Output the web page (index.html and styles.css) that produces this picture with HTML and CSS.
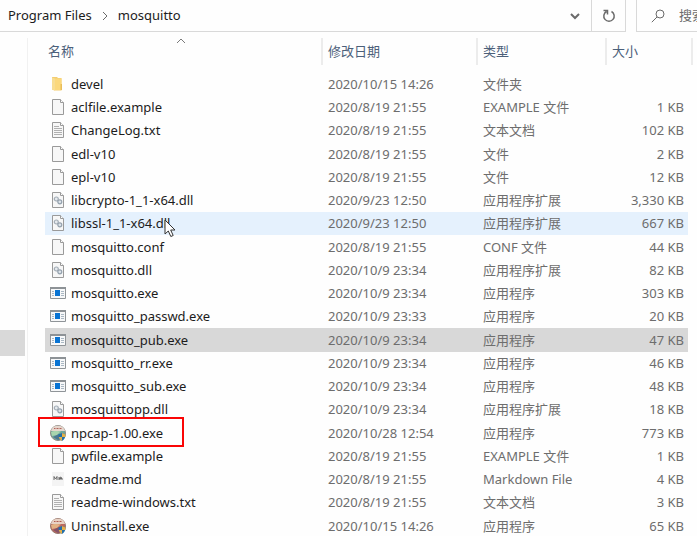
FILE: index.html
```html
<!DOCTYPE html>
<html lang="zh-CN">
<head>
<meta charset="utf-8">
<title>mosquitto</title>
<link rel="stylesheet" href="styles.css">
</head>
<body>
<svg class="sprite" aria-hidden="true">
  <symbol id="folder" viewBox="0 0 16 16"><path d="M2 1h5l1 1h3.500v12.500H4.500L2 13.500z" fill="#f3cd72"/><path d="M2 1.500l3 1v12L2 13.500z" fill="#f8dd92"/><path d="M5 2.500h6.500V14H5z" fill="#fbd87c"/><path d="M10.500 8h1.500v6h-1.500z" fill="#e9bd58"/></symbol>
  <symbol id="file" viewBox="0 0 16 16"><path d="M2.500.5h8l3 3v12h-11z" fill="#f7f7f7" stroke="#9a9a9a"/><path d="M10.500.5v3h3" fill="#fff" stroke="#9a9a9a"/></symbol>
  <symbol id="text" viewBox="0 0 16 16"><use href="#file"/><path d="M4 4.500h5M4 6.500h8M4 8.500h8M4 10.500h8M4 12.500h8" stroke="#b0b0b0"/></symbol>
  <symbol id="dll" viewBox="0 0 16 16"><use href="#file"/><circle cx="6.300" cy="7" r="2" fill="#e6eaee" stroke="#a3adb7" stroke-width="1.200"/><circle cx="9.800" cy="9.800" r="2" fill="#dde4ea" stroke="#94a1ad" stroke-width="1.200"/></symbol>
  <symbol id="exe" viewBox="0 0 16 16"><path d="M.5 2.500h15v11H.5z" fill="#f7f8f9" stroke="#8f9498"/><path d="M0 2h16v2H0z" fill="#8d9296"/><path d="M5 5h5v6H5z" fill="#0873d3"/><path d="M2 6.500h2M2 8.500h2M2 10.500h2M11 6.500h3M11 8.500h3M11 10.500h3" stroke="#aab8c4"/></symbol>
  <symbol id="shield" viewBox="0 0 16 16"><path d="M8.500 9.500l3.500-1.500 3.500 1.500c0 3-1 5-3.500 6.500-2.500-1.500-3.500-3.500-3.500-6.500z" fill="#246fa8"/><path d="M12 8l3.500 1.500V12H12zM8.800 12H12v4c-2-1.200-3-2.500-3.200-4z" fill="#e5b048"/></symbol>
  <symbol id="npcap" viewBox="0 0 16 16"><circle cx="8" cy="8" r="7.500" fill="#6fa69b" stroke="#8f8a84"/><path d="M1 6C2 2 5 .8 8 .8S14 2 15 6z" fill="#e6d6cd"/><path d="M4 3.500h8" stroke="#b0645a" stroke-dasharray="1 .5"/><path d="M1 7c4-2 7 0 10-1l-4 4-5 1z" fill="#a9d4ae"/><path d="M3 12l6-3 2 5-3 1z" fill="#4d7690"/><use href="#shield"/></symbol>
  <symbol id="uninstall" viewBox="0 0 16 16"><circle cx="8" cy="8" r="7.500" fill="#bd6a60" stroke="#94776d"/><path d="M1 6C2 2 5 .8 8 .8S14 2 15 6z" fill="#e8d2c4"/><path d="M4 3.500h8" stroke="#b0584c" stroke-dasharray="1 .5"/><path d="M1 7c4-2 7 0 10-1l-4 4-5 1z" fill="#e1b183"/><path d="M3 12l6-3 2 5-3 1z" fill="#855367"/><use href="#shield"/></symbol>
  <symbol id="markdown" viewBox="0 0 16 16"><path d="M2 1h12v14H2z" fill="#f4f4f4"/><path d="M4 9V5.500L5.500 8 7 5.500V9M9 9V6M10 9V6l2 1v2M9 7.500h3" fill="none" stroke="#6a6a6a"/></symbol>
</svg>

<header class="topbar">
  <div class="address">
    <nav class="crumbs" aria-label="路径">
      <button type="button">Program Files</button>
      <svg class="crumb-arrow" viewBox="0 0 8 10"><path d="M2 1l4 4-4 4"/></svg>
      <button type="button">mosquitto</button>
    </nav>
    <button class="tool history" type="button" aria-label="历史记录"><svg viewBox="0 0 12 12"><path d="M2 4l4 4 4-4"/></svg></button>
    <button class="tool refresh" type="button" aria-label="刷新"><svg viewBox="0 0 14 14"><path d="M9.500 2.500a5.200 5.200 0 1 1-5 0M1.500 1.500h4v4"/></svg></button>
  </div>
  <label class="search">
    <svg viewBox="0 0 14 14"><circle cx="9" cy="5" r="4"/><path d="M6 8L.8 13.200"/></svg>
    <input type="search" placeholder="搜索" aria-label="搜索">
  </label>
</header>

<div class="body">
  <aside class="tree"><div class="tree-current"></div></aside>
  <main class="list">
    <table>
      <colgroup><col><col class="c-date"><col class="c-type"><col class="c-size"><col class="c-end"></colgroup>
      <thead>
        <tr>
          <th><div>名称</div><svg class="sort" viewBox="0 0 10 6"><path d="M1 5l4-4 4 4"/></svg></th>
          <th><div>修改日期</div></th><th><div>类型</div></th><th><div>大小</div></th><td><div></div></td>
        </tr>
      </thead>
      <tbody>
        <tr><td><span class="name"><svg><use href="#folder"/></svg>devel</span></td><td>2020/10/15 14:26</td><td>文件夹</td><td></td><td></td></tr>
        <tr><td><span class="name"><svg><use href="#file"/></svg>aclfile.example</span></td><td>2020/8/19 21:55</td><td>EXAMPLE 文件</td><td>1 KB</td><td></td></tr>
        <tr><td><span class="name"><svg><use href="#text"/></svg>ChangeLog.txt</span></td><td>2020/8/19 21:55</td><td>文本文档</td><td>102 KB</td><td></td></tr>
        <tr><td><span class="name"><svg><use href="#file"/></svg>edl-v10</span></td><td>2020/8/19 21:55</td><td>文件</td><td>2 KB</td><td></td></tr>
        <tr><td><span class="name"><svg><use href="#file"/></svg>epl-v10</span></td><td>2020/8/19 21:55</td><td>文件</td><td>12 KB</td><td></td></tr>
        <tr><td><span class="name"><svg><use href="#dll"/></svg>libcrypto-1_1-x64.dll</span></td><td>2020/9/23 12:50</td><td>应用程序扩展</td><td>3,330 KB</td><td></td></tr>
        <tr class="hover"><td><span class="name"><svg><use href="#dll"/></svg>libssl-1_1-x64.dll</span><svg class="pointer" viewBox="0 0 12 19"><path d="M1 1v14l3.300-3 2.500 5.500 2.400-1-2.500-5.500H11z"/></svg></td><td>2020/9/23 12:50</td><td>应用程序扩展</td><td>667 KB</td><td></td></tr>
        <tr><td><span class="name"><svg><use href="#file"/></svg>mosquitto.conf</span></td><td>2020/8/19 21:55</td><td>CONF 文件</td><td>44 KB</td><td></td></tr>
        <tr><td><span class="name"><svg><use href="#dll"/></svg>mosquitto.dll</span></td><td>2020/10/9 23:34</td><td>应用程序扩展</td><td>82 KB</td><td></td></tr>
        <tr><td><span class="name"><svg><use href="#exe"/></svg>mosquitto.exe</span></td><td>2020/10/9 23:34</td><td>应用程序</td><td>303 KB</td><td></td></tr>
        <tr><td><span class="name"><svg><use href="#exe"/></svg>mosquitto_passwd.exe</span></td><td>2020/10/9 23:33</td><td>应用程序</td><td>20 KB</td><td></td></tr>
        <tr class="selected"><td><span class="name"><svg><use href="#exe"/></svg>mosquitto_pub.exe</span></td><td>2020/10/9 23:34</td><td>应用程序</td><td>47 KB</td><td></td></tr>
        <tr><td><span class="name"><svg><use href="#exe"/></svg>mosquitto_rr.exe</span></td><td>2020/10/9 23:34</td><td>应用程序</td><td>46 KB</td><td></td></tr>
        <tr><td><span class="name"><svg><use href="#exe"/></svg>mosquitto_sub.exe</span></td><td>2020/10/9 23:34</td><td>应用程序</td><td>48 KB</td><td></td></tr>
        <tr><td><span class="name"><svg><use href="#dll"/></svg>mosquittopp.dll</span></td><td>2020/10/9 23:34</td><td>应用程序扩展</td><td>18 KB</td><td></td></tr>
        <tr><td><span class="name"><svg><use href="#npcap"/></svg>npcap-1.00.exe</span><span class="marker"></span></td><td>2020/10/28 12:54</td><td>应用程序</td><td>773 KB</td><td></td></tr>
        <tr><td><span class="name"><svg><use href="#file"/></svg>pwfile.example</span></td><td>2020/8/19 21:55</td><td>EXAMPLE 文件</td><td>1 KB</td><td></td></tr>
        <tr><td><span class="name"><svg><use href="#markdown"/></svg>readme.md</span></td><td>2020/8/19 21:55</td><td>Markdown File</td><td>4 KB</td><td></td></tr>
        <tr><td><span class="name"><svg><use href="#text"/></svg>readme-windows.txt</span></td><td>2020/8/19 21:55</td><td>文本文档</td><td>3 KB</td><td></td></tr>
        <tr><td><span class="name"><svg><use href="#uninstall"/></svg>Uninstall.exe</span></td><td>2020/10/15 14:26</td><td>应用程序</td><td>65 KB</td><td></td></tr>
      </tbody>
    </table>
  </main>
</div>
</body>
</html>
```
FILE: styles.css
```css
* { box-sizing: border-box; }

body {
  margin: 0;
  height: 100vh;
  display: flex;
  flex-direction: column;
  overflow: hidden;
  background: #fefefe;
  color: #1c1c1c;
  font: 13px/23px "Noto Sans", "Noto Sans CJK SC", sans-serif;
}

button, input {
  border: 0;
  padding: 0;
  background: none;
  color: inherit;
  font: inherit;
}

.sprite { position: absolute; width: 0; height: 0; }

.topbar { display: flex; flex: none; height: 32px; overflow: hidden; }

.address {
  flex: 1;
  display: flex;
  border-right: 1px solid #d9d9d9;
  border-bottom: 1px solid #d9d9d9;
}

.crumbs { flex: 1; display: flex; align-items: center; padding-left: 8px; gap: 9px; }
.crumb-arrow { width: 8px; height: 10px; }
.topbar svg { fill: none; stroke: #6a6a6a; flex: none; }

.tool { display: flex; align-items: center; justify-content: center; width: 33px; }
.history svg { width: 12px; height: 12px; stroke-width: 2; }
.refresh { border-left: 1px solid #d9d9d9; width: 34px; }
.refresh svg { width: 14px; height: 14px; stroke-width: 1.5; }

.search {
  display: flex;
  align-items: center;
  flex: none;
  width: 61px;
  margin-left: 10px;
  padding-left: 14px;
  gap: 14px;
  overflow: hidden;
  border-left: 1px solid #d9d9d9;
  border-bottom: 1px solid #d9d9d9;
}
.search svg { width: 14px; height: 14px; }
.search input { width: 120px; flex: none; }
.search input::placeholder { color: #6d6d6d; opacity: 1; }

.body { flex: 1; display: flex; min-height: 0; }

.tree { flex: none; width: 28px; margin-top: 6px; border-right: 1px solid #f1f1f1; }
.tree-current { height: 26px; margin: 292px 2px 0 0; background: #d9d9d9; }

.list { flex: 1; min-width: 0; padding: 0 4px 0 17px; }

table { width: 100%; table-layout: fixed; border-collapse: collapse; }
.c-date { width: 155px; }
.c-type { width: 129px; }
.c-size { width: 83px; }
.c-end { width: 5px; }

th, td { position: relative; padding: 0; text-align: left; font-weight: 400; white-space: nowrap; }

thead th, thead td { padding: 6px 0 8px; color: #4c607a; }
thead div { height: 27px; padding-left: 5px; border-left: 2px solid #ececec; line-height: 27px; }
thead th:first-child div { padding-left: 3px; border-left: 0; }
thead td div { margin-left: 3px; }
.sort {
  position: absolute;
  top: 6px;
  left: 0;
  right: 4px;
  width: 10px;
  height: 6px;
  margin: 0 auto;
  fill: none;
  stroke: #7a7a7a;
}

tbody td { height: 23px; padding-left: 7px; color: #6d6d6d; line-height: 23px; }
tbody tr:nth-child(4n) td { height: 24px; }
tbody td:first-child { padding-left: 5px; color: #1c1c1c; }
tbody td:nth-child(4) { padding: 0 4px 0 0; text-align: right; }

.name { display: flex; align-items: flex-start; gap: 5px; }
.name svg { width: 16px; height: 16px; margin-top: 3px; flex: none; }

.hover td:not(:last-child) { background: #e5f1fd; }
.selected td:not(:last-child) { background: #d8d8d8; }

.pointer {
  position: absolute;
  left: 119px;
  top: 7px;
  width: 12px;
  height: 19px;
  z-index: 1;
  fill: #fff;
  stroke: #333;
}

.marker {
  position: absolute;
  left: -7px;
  top: -4px;
  width: 146px;
  height: 30px;
  z-index: 1;
  border: 2px solid #fa0505;
}
```
